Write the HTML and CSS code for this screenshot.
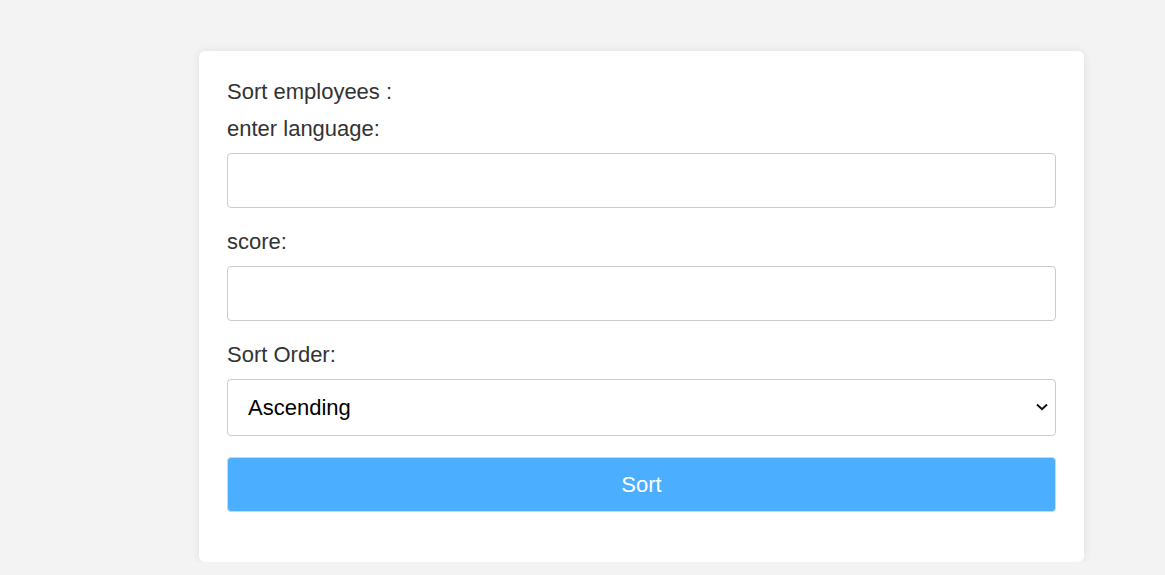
FILE: index.html
```html
<!DOCTYPE html>
<html>
<head>
<meta charset="utf-8">
<link rel="stylesheet" href="styles.css">
</head>
<body>
<div class="page">
  <form class="card">
    <label class="title">Sort employees :</label>
    <label class="label">enter language:</label>
    <input class="field" type="text">
    <label class="label">score:</label>
    <input class="field" type="text">
    <label class="label">Sort Order:</label>
    <div class="select-wrap">
      <select class="field select">
        <option>Ascending</option>
        <option>Descending</option>
      </select>
      <svg class="chev" width="12" height="8" viewBox="0 0 12 8"><path d="M1 1.5 L6 6.2 L11 1.5" fill="none" stroke="#111" stroke-width="2"/></svg>
    </div>
    <button class="btn" type="button">Sort</button>
  </form>
</div>
</body>
</html>
```
FILE: styles.css
```css
html, body {
  margin: 0;
  padding: 0;
  background: #f3f3f3;
  font-family: "Liberation Sans", Arial, sans-serif;
}
.page {
  padding: 51px 0 0 199px;
}
.card {
  width: 829px;
  padding: 28px 28px 28px 28px;
  background: #fff;
  border-radius: 6px;
  box-shadow: 0 0 10px rgba(0, 0, 0, 0.08);
  display: flex;
  flex-direction: column;
}
.title, .label {
  display: block;
  font-size: 22px;
  line-height: 26px;
  color: #333;
  margin-bottom: 11px;
}
.field {
  box-sizing: border-box;
  height: 55px;
  border: 1px solid #ccc;
  border-radius: 4px;
  background: #fff;
  margin: 0 0 21px 0;
  padding: 0 16px;
  font-family: "Liberation Sans", Arial, sans-serif;
  font-size: 22px;
  color: #000;
  width: 100%;
}
.select-wrap {
  position: relative;
}
.select {
  -webkit-appearance: none;
  appearance: none;
  height: 57px;
  padding: 0 40px 0 20px;
  margin-bottom: 21px;
}
.chev {
  position: absolute;
  right: 8px;
  top: 24px;
  pointer-events: none;
}
.btn {
  box-sizing: border-box;
  width: 100%;
  height: 55px;
  border: 1px solid #d0d7de;
  border-radius: 4px;
  background: #4caeff;
  color: #fff;
  font-family: "Liberation Sans", Arial, sans-serif;
  font-size: 22px;
  margin-bottom: 22px;
}
```
